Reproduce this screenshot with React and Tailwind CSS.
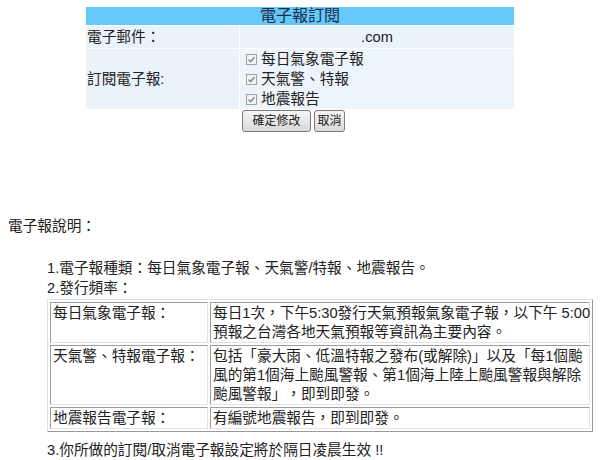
// ==============================|| 電子報訂閱 ||============================== //

const font = "font-['Liberation_Sans','Noto_Sans_CJK_TC',sans-serif]";

const papers = ['每日氣象電子報', '天氣警、特報', '地震報告'];

function Check() {
  return (
    <span className="mr-[4px] inline-flex h-[11px] w-[11px] items-center justify-center border border-[#a3a3a3] bg-[#f3f3f3] align-[-1px]">
      <svg viewBox="0 0 9 9" className="h-[9px] w-[9px]">
        <path d="M1.6 4.6 L3.6 6.6 L7.4 2.2" fill="none" stroke="#7f8c99" strokeWidth="1.5" />
      </svg>
    </span>
  );
}

function Btn({ children, className }) {
  return (
    <button
      type="button"
      className={`h-[22px] rounded-[3px] border border-[#7a7a7a] bg-[linear-gradient(#f7f7f7,#d9d9d9)] p-0 text-center text-[12px] leading-[18px] text-[#222] ${className}`}
    >
      {children}
    </button>
  );
}

const cell = 'border border-t-[#9d9d9d] border-l-[#9d9d9d] border-r-[#e2e2e2] border-b-[#e2e2e2] px-[2px] pt-[1px] align-top';

export default function App() {
  return (
    <div className={`${font} min-h-[460px] w-[600px] bg-white pt-[6px] text-[14.67px] text-[#222] [text-spacing-trim:space-all]`}>
      <table className="mx-auto w-[430px] border-separate border-spacing-[1px]">
        <tbody>
          <tr>
            <td colSpan={2} className="h-[18px] bg-[#66c8f7] p-0 text-center text-[16px] leading-[18px] text-[#1a2b4c]">
              電子報訂閱
            </td>
          </tr>
          <tr>
            <td className="h-[22px] w-[153px] bg-[#eaf3fa] p-0 pl-[1px] leading-[22px]">電子郵件：</td>
            <td className="bg-[#eaf3fa] p-0 text-center leading-[22px]">.com</td>
          </tr>
          <tr>
            <td className="bg-[#eaf3fa] p-0 pl-[1px] align-middle">訂閱電子報:</td>
            <td className="bg-[#edf4fa] p-0 pl-[6px] leading-[20px]">
              {papers.map((p) => (
                <div key={p} className="flex items-center">
                  <Check />
                  {p}
                </div>
              ))}
            </td>
          </tr>
          <tr>
            <td className="p-0"></td>
            <td className="p-0 pl-[2px]">
              <div className="flex gap-[3px]">
                <Btn className="w-[69px]">確定修改</Btn>
                <Btn className="w-[31px]">取消</Btn>
              </div>
            </td>
          </tr>
        </tbody>
      </table>

      <div className="mt-[83px] pl-[8px] leading-[20px]">電子報說明：</div>

      <div className="mt-[22px] pl-[47px] leading-[20px]">
        <div>1.電子報種類：每日氣象電子報、天氣警/特報、地震報告。</div>
        <div>2.發行頻率：</div>
        <table className="mt-[1px] w-[546px] table-fixed border-separate border-spacing-[2px] border border-t-[#e0e0e0] border-l-[#e0e0e0] border-r-[#9a9a9a] border-b-[#9a9a9a] leading-[19px]">
          <tbody>
            <tr>
              <td className={`${cell} w-[158px]`}>每日氣象電子報：</td>
              <td className={`${cell} whitespace-nowrap`}>
                每日1次，下午5:30發行天氣預報氣象電子報，以下午 5:00
                <br />
                預報之台灣各地天氣預報等資訊為主要內容。
              </td>
            </tr>
            <tr>
              <td className={cell}>天氣警、特報電子報：</td>
              <td className={`${cell} whitespace-nowrap`}>
                包括「豪大雨、低溫特報之發布(或解除)」以及「每1個颱
                <br />
                風的第1個海上颱風警報、第1個海上陸上颱風警報與解除
                <br />
                颱風警報」，即到即發。
              </td>
            </tr>
            <tr>
              <td className={cell}>地震報告電子報：</td>
              <td className={cell}>有編號地震報告，即到即發。</td>
            </tr>
          </tbody>
        </table>
        <div className="mt-[8px]">3.你所做的訂閱/取消電子報設定將於隔日凌晨生效 !!</div>
      </div>
    </div>
  );
}
